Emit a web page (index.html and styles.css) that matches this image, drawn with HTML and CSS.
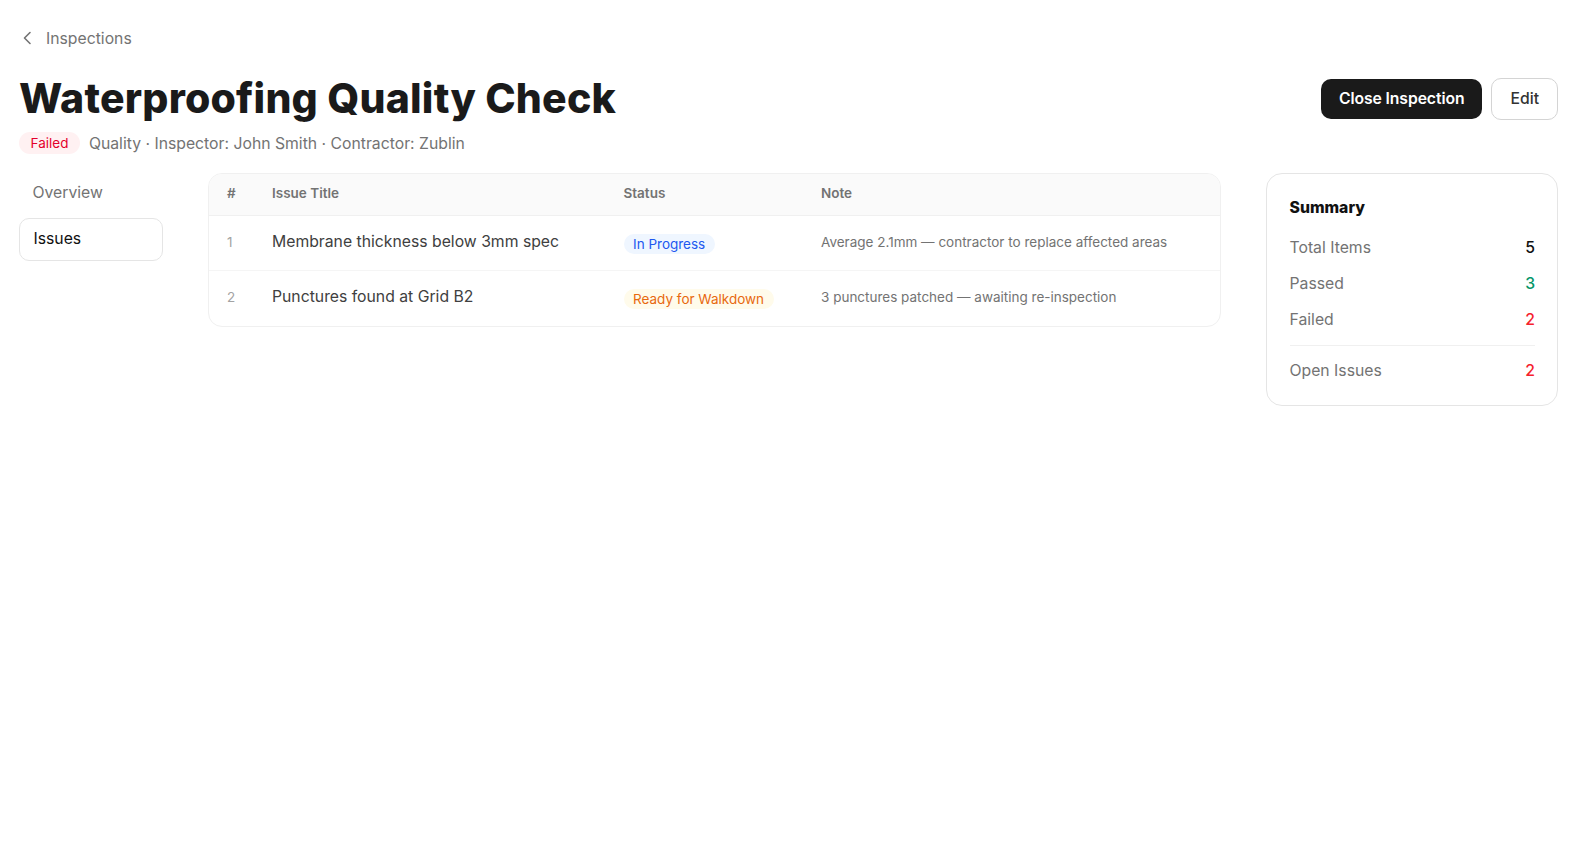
FILE: index.html
```html
<!DOCTYPE html>
<html lang="en">
<head>
    <meta charset="UTF-8">
    <meta name="viewport" content="width=device-width, initial-scale=1.0">
    <link rel="stylesheet" href="styles.css">
    <title>Waterproofing Quality Check</title>
</head>
<body>
    <div class="page">
        <a class="back" href="#">
            <svg class="back-icon" width="16" height="16" viewBox="0 0 16 16" fill="none" stroke="currentColor" stroke-width="1.6" stroke-linecap="round" stroke-linejoin="round">
                <path d="M11 2.5 L5.5 8 L11 13.5"/>
            </svg>
            Inspections
        </a>

        <div class="header">
            <div>
                <h1>Waterproofing Quality Check</h1>
                <div class="meta">
                    <span class="badge badge-failed">Failed</span>
                    Quality · Inspector: John Smith · Contractor: Zublin
                </div>
            </div>
            <div class="actions">
                <button class="btn btn-primary">Close Inspection</button>
                <button class="btn btn-outline">Edit</button>
            </div>
        </div>

        <div class="content">
            <nav class="tabs">
                <a class="tab" href="#">Overview</a>
                <a class="tab active" href="#">Issues</a>
            </nav>

            <div class="table-wrap">
                <table>
                    <thead>
                        <tr>
                            <th class="col-num">#</th>
                            <th class="col-title">Issue Title</th>
                            <th class="col-status">Status</th>
                            <th>Note</th>
                        </tr>
                    </thead>
                    <tbody>
                        <tr>
                            <td class="num">1</td>
                            <td class="issue">Membrane thickness below 3mm spec</td>
                            <td><span class="badge badge-progress">In Progress</span></td>
                            <td class="note">Average 2.1mm — contractor to replace affected areas</td>
                        </tr>
                        <tr>
                            <td class="num">2</td>
                            <td class="issue">Punctures found at Grid B2</td>
                            <td><span class="badge badge-ready">Ready for Walkdown</span></td>
                            <td class="note">3 punctures patched — awaiting re-inspection</td>
                        </tr>
                    </tbody>
                </table>
            </div>

            <aside class="summary">
                <h2>Summary</h2>
                <div class="stat"><span>Total Items</span><b>5</b></div>
                <div class="stat"><span>Passed</span><b class="green">3</b></div>
                <div class="stat"><span>Failed</span><b class="red">2</b></div>
                <div class="stat stat-open"><span>Open Issues</span><b class="red">2</b></div>
            </aside>
        </div>
    </div>
</body>
</html>
```

FILE: styles.css
```css
body {
    font-family: Inter, "Liberation Sans", sans-serif;
    margin: 0;
    background-color: #fff;
    color: #1a1a1a;
}

.page {
    padding: 27px 37px 0 19px;
}

.back {
    display: flex;
    align-items: center;
    gap: 11px;
    height: 22px;
    font-size: 15.75px;
    color: #737373;
    text-decoration: none;
}

.header {
    display: flex;
    justify-content: space-between;
    margin-top: 23px;
}

h1 {
    font-family: Inter, sans-serif;
    font-weight: 800;
    font-size: 41px;
    line-height: 52px;
    letter-spacing: 0.2px;
    margin: 0;
    color: #1a1a1a;
}

.meta {
    display: flex;
    align-items: center;
    gap: 9px;
    margin-top: 8px;
    font-size: 15.75px;
    color: #737373;
}

.badge {
    display: inline-block;
    padding: 0 9.5px;
    line-height: 20px;
    font-size: 13.5px;
    border-radius: 11px;
}

.badge-failed {
    padding: 0 11.5px;
    line-height: 22px;
    background-color: #fff1f2;
    color: #e4002b;
}

.badge-progress {
    background-color: #eff6ff;
    color: #2158f0;
}

.badge-ready {
    background-color: #fffbeb;
    color: #e8690f;
}

.actions {
    display: flex;
    align-items: center;
    gap: 9px;
    height: 42px;
    margin-top: 6px;
}

.btn {
    font-family: inherit;
    font-size: 15.75px;
    border-radius: 10px;
    cursor: pointer;
}

.btn-primary {
    height: 40px;
    padding: 0 18px 1px;
    font-weight: 600;
    letter-spacing: -0.1px;
    color: #fff;
    background-color: #1a1a1a;
    border: none;
}

.btn-outline {
    height: 42px;
    padding: 0 18px 1px;
    font-weight: 500;
    color: #333;
    background-color: #fff;
    border: 1px solid #d4d4d4;
}

.content {
    display: flex;
    align-items: flex-start;
    gap: 45px;
    margin-top: 17px;
}

.tabs {
    display: flex;
    flex-direction: column;
    flex: 0 0 144px;
    gap: 3px;
}

.tab {
    display: block;
    padding: 0 13.5px;
    line-height: 44px;
    font-size: 15.75px;
    color: #737373;
    text-decoration: none;
    border-radius: 10px;
}

.tab.active {
    padding-bottom: 2px;
    line-height: 39px;
    color: #111;
    border: 1px solid #e5e5e5;
}

.table-wrap {
    flex: 1;
    margin-top: 2px;
    border: 1px solid #f0f0f0;
    border-radius: 14px;
    overflow: hidden;
}

table {
    width: 100%;
    border-collapse: collapse;
    table-layout: fixed;
}

th {
    height: 38px;
    padding: 0 0 3px 18px;
    font-size: 13.5px;
    font-weight: 600;
    text-align: left;
    color: #737373;
    background-color: #fafafa;
    border-bottom: 1px solid #f0f0f0;
}

.col-num {
    width: 27px;
}

.col-title {
    width: 333.5px;
}

.col-status {
    width: 179.5px;
}

tbody tr {
    height: 55px;
}

td {
    padding: 0 0 0 18px;
    border-bottom: 1px solid #f5f5f5;
}

tr:last-child td {
    border-bottom: none;
}

.num {
    padding-bottom: 2px;
    font-size: 13.5px;
    color: #a3a3a3;
}

.issue {
    padding-bottom: 3px;
    font-size: 15.75px;
    color: #404040;
}

.note {
    padding-bottom: 2px;
    font-size: 13.5px;
    color: #737373;
}

.summary {
    flex: 0 0 245.5px;
    margin-top: 2px;
    padding: 23px 22px 15px 22.5px;
    border: 1px solid #e5e5e5;
    border-radius: 16px;
}

.summary h2 {
    font-family: Inter, sans-serif;
    font-size: 15.75px;
    font-weight: 800;
    line-height: 22px;
    margin: 0 0 10px;
    color: #111;
}

.stat {
    display: flex;
    justify-content: space-between;
    align-items: center;
    height: 36px;
    font-size: 15.75px;
    color: #737373;
}

.stat b {
    font-weight: 500;
    color: #111;
}

.stat b.green {
    color: #059669;
}

.stat b.red {
    color: #f5222d;
}

.stat-open {
    height: 45px;
    margin-top: 8px;
    padding-top: 5px;
    box-sizing: border-box;
    border-top: 1px solid #f0f0f0;
}
```
